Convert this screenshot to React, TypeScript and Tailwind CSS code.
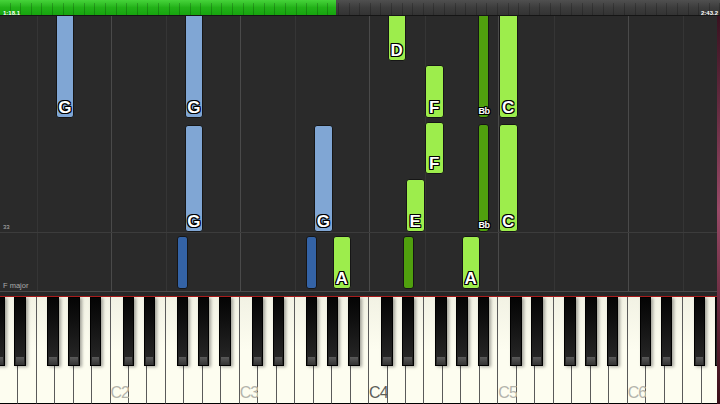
import React from "react";

const OCT = 129.3;
const W = OCT / 7;
const C2 = 110.5;
const C1 = C2 - OCT;

type Note = { x: number; w: number; t: number; b: number; c: string; l?: string };

const LB = "#80a6d4";
const DB = "#3463a6";
const LG = "#9ded4c";
const DG = "#50a00e";

// note-area coordinates (area starts at y=16)
const notes: Note[] = [
  { x: 55.5, w: 18.5, t: -6, b: 102, c: LB, l: "G" },
  { x: 184.5, w: 18.5, t: -6, b: 102, c: LB, l: "G" },
  { x: 184.5, w: 18.5, t: 109, b: 216, c: LB, l: "G" },
  { x: 314, w: 18.5, t: 109, b: 216, c: LB, l: "G" },
  { x: 176.5, w: 11, t: 220, b: 273, c: DB },
  { x: 305.5, w: 11, t: 220, b: 273, c: DB },
  { x: 332.5, w: 18.5, t: 220, b: 273, c: LG, l: "A" },
  { x: 387.5, w: 18.5, t: -6, b: 45, c: LG, l: "D" },
  { x: 425, w: 18.5, t: 49, b: 102, c: LG, l: "F" },
  { x: 425, w: 18.5, t: 106, b: 158, c: LG, l: "F" },
  { x: 406, w: 18.5, t: 163, b: 216, c: LG, l: "E" },
  { x: 402.5, w: 11, t: 220, b: 273, c: DG },
  { x: 461.5, w: 18.5, t: 220, b: 273, c: LG, l: "A" },
  { x: 477.5, w: 11.5, t: -6, b: 102, c: DG, l: "Bb" },
  { x: 477.5, w: 11.5, t: 108, b: 216, c: DG, l: "Bb" },
  { x: 499, w: 18.5, t: -6, b: 102, c: LG, l: "C" },
  { x: 499, w: 18.5, t: 108, b: 216, c: LG, l: "C" },
];

const outline =
  "[text-shadow:1px_0_0_#000,-1px_0_0_#000,0_1px_0_#000,0_-1px_0_#000,1px_1px_0_#000,-1px_-1px_0_#000,1px_-1px_0_#000,-1px_1px_0_#000]";

function NoteBar({ n }: { n: Note }) {
  const small = n.l === "Bb";
  return (
    <div
      className="absolute rounded-[3px] border border-[#161616]"
      style={{ left: n.x, top: n.t, width: n.w, height: n.b - n.t, background: n.c }}
    >
      {n.l && (
        <span
          className={
            small
              ? "absolute inset-x-0 bottom-[1px] text-center font-bold text-white leading-none text-[9px] tracking-[-0.5px] " + outline
              : "absolute inset-x-0 bottom-[1px] text-center font-bold text-white leading-none text-[17px] " + outline
          }
        >
          {n.l}
        </span>
      )}
    </div>
  );
}

function TopBar() {
  const ticks = Array.from({ length: 68 }, (_, i) => i);
  return (
    <div className="relative h-[16px] shrink-0 flex border-b border-[#151515]">
      <div className="w-[336px] bg-gradient-to-b from-[#46d43a] via-[#22b218] to-[#17a40f]" />
      <div className="flex-1 bg-gradient-to-b from-[#505050] via-[#3d3d3d] to-[#333333]" />
      <div className="absolute inset-0 flex pt-[3px]">
        {ticks.map((i) => (
          <div key={i} className="w-[10.6px] shrink-0 border-r border-black/20" />
        ))}
      </div>
      <span className="absolute left-[3px] top-[10px] text-[6px] font-bold leading-none text-white">1:18.1</span>
      <span className="absolute right-[2px] top-[10px] text-[6px] font-bold leading-none text-white">2:43.2</span>
    </div>
  );
}

function NoteArea() {
  const cLines = [0, 1, 2, 3, 4].map((i) => C2 + i * OCT);
  const fLines = [0, 1, 2, 3, 4, 5].map((i) => C1 + 3 * W + i * OCT);
  return (
    <div className="relative h-[275px] shrink-0 overflow-hidden bg-[#2a2a2a]">
      {fLines.map((x, i) => (
        <div key={"f" + i} className="absolute top-0 bottom-0 w-px bg-[#353535]" style={{ left: x }} />
      ))}
      {cLines.map((x, i) => (
        <div key={"c" + i} className="absolute top-0 bottom-0 w-px bg-[#4a4a4a]" style={{ left: x }} />
      ))}
      <div className="absolute left-0 right-0 top-[216px] h-px bg-[#3c3c3c]" />
      <span className="absolute left-[3px] top-[208px] text-[6px] leading-none text-[#b5b5b5]">33</span>
      <span className="absolute left-[3px] top-[266px] text-[7.5px] leading-none text-[#aaaaaa]">F major</span>
      {notes.map((n, i) => (
        <NoteBar key={i} n={n} />
      ))}
    </div>
  );
}

const whiteNames = ["C", "D", "E", "F", "G", "A", "B"];

function Keyboard() {
  // white keys from D1 to G6
  const whites: { name: string; oct: number }[] = [];
  for (let o = 1; o <= 6; o++) {
    for (let k = 0; k < 7; k++) {
      if (o === 1 && k === 0) continue;
      if (o === 6 && k > 4) continue;
      whites.push({ name: whiteNames[k], oct: o });
    }
  }
  const blackOffsets = [12, 33, 66, 87, 108.5];
  const blacks: number[] = [];
  for (let o = 0; o < 6; o++) {
    for (const off of blackOffsets) blacks.push(C1 + o * OCT + off);
  }
  return (
    <div className="relative h-[107px] shrink-0 overflow-hidden bg-[#fdfdf0]">
      <div className="flex h-full ml-[-0.3px]">
        {whites.map((k, i) => (
          <div
            key={i}
            className="relative w-[18.471px] shrink-0 h-full bg-gradient-to-b from-[#f2f2e4] via-[#fdfdf0] to-[#fdfdf0] border-r border-[#5a5a5a] border-b border-b-black"
          >
            {k.name === "C" && k.oct >= 2 && (
              <span
                className={
                  k.oct === 4
                    ? "absolute left-[0px] bottom-[2px] text-[16px] leading-none tracking-[-1px] text-[#5e5e5a]"
                    : "absolute left-[0px] bottom-[2px] text-[16px] leading-none tracking-[-1px] text-[#b4b4ac]"
                }
              >
                {"C" + (k.oct)}
              </span>
            )}
          </div>
        ))}
      </div>
      {blacks.map((x, i) => (
        <div
          key={i}
          className="absolute top-0 h-[69px] w-[11.5px] border border-black bg-gradient-to-b from-[#050505] to-[#2a2a2a] shadow-[2px_1px_3px_rgba(0,0,0,0.35)] flex flex-col justify-end"
          style={{ left: x }}
        >
          <div className="h-[8px] mx-[1px] mb-[0px] bg-gradient-to-b from-[#5a5a5a] to-[#333333]" />
        </div>
      ))}
    </div>
  );
}

export default function App() {
  return (
    <div
      className="relative w-[720px] h-[404px] overflow-hidden bg-[#222] flex flex-col"
      style={{ fontFamily: '"Liberation Sans", Arial, sans-serif' }}
    >
      <TopBar />
      <NoteArea />
      <div className="h-px shrink-0 bg-[#4a4a4a]" />
      <div className="h-[4px] shrink-0 bg-[#262626]" />
      <div className="h-px shrink-0 bg-[#a81c1c]" />
      <Keyboard />
      <div className="absolute right-0 top-[16px] bottom-0 w-[3px] bg-gradient-to-b from-[#3a1220] via-[#9a4a68] to-[#3a0e18]" />
    </div>
  );
}
